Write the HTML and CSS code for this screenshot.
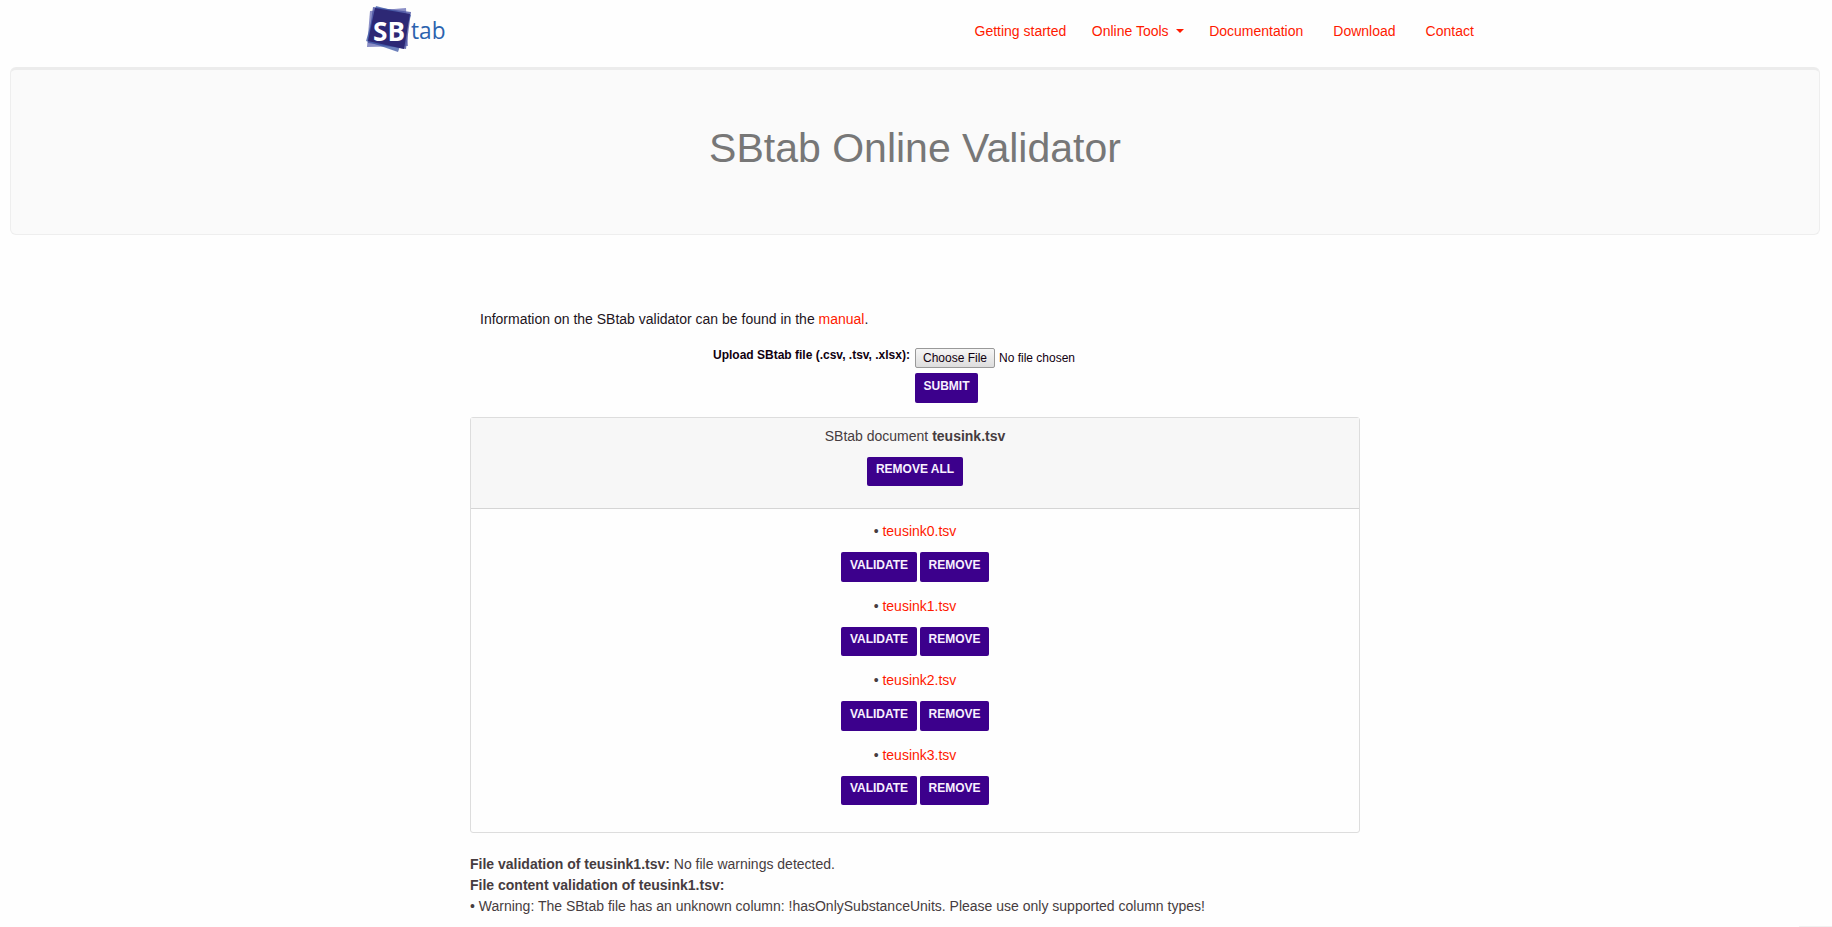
FILE: index.html
```html
<!DOCTYPE html>
<html lang="en">
<head>
<meta charset="utf-8">
<title>SBtab Online Validator</title>
<link rel="stylesheet" href="styles.css">
</head>
<body>
<nav class="navbar">
  <a class="logo" href="#" aria-label="SBtab">
    <svg width="84" height="54" viewBox="0 0 84 54">
      <path d="M7 11L43 8L45 46L4 47Z" fill="#5a5fae" opacity=".7"/>
      <path d="M10 7L48 12L43 49L5 43Z" fill="#4950a0" opacity=".8"/>
      <path d="M13 6L48 15L35 52L3 41Z" fill="#3b55a4" opacity=".75"/>
      <path d="M12 8L47 14L41 49L5 41Z" fill="#2d2875"/>
      <text class="logo-sb" x="10" y="40.5" textLength="32" lengthAdjust="spacingAndGlyphs">SB</text>
      <text class="logo-tab" x="48" y="39" textLength="34.5" lengthAdjust="spacingAndGlyphs">tab</text>
    </svg>
  </a>
  <div class="nav-links">
    <a href="#">Getting started</a>
    <a class="tools" href="#">Online Tools<span class="caret"></span></a>
    <a class="docs" href="#">Documentation</a>
    <a class="download" href="#">Download</a>
    <a class="contact" href="#">Contact</a>
  </div>
</nav>
<header class="jumbotron"><h1>SBtab Online Validator</h1></header>
<main class="content">
  <p class="intro">Information on the SBtab validator can be found in the <a href="#">manual</a>.</p>
  <form class="upload">
    <label class="upload-label">Upload SBtab file (.csv, .tsv, .xlsx):</label>
    <div class="upload-fields">
      <div class="file"><button type="button" class="choose">Choose File</button><span>No file chosen</span></div>
      <button type="button" class="btn submit">SUBMIT</button>
    </div>
  </form>
  <section class="card">
    <div class="card-header">
      <p>SBtab document <b>teusink.tsv</b></p>
      <button type="button" class="btn remove-all">REMOVE ALL</button>
    </div>
    <div class="card-body">
      <div class="item"><p>• <a href="#">teusink0.tsv</a></p><div class="actions"><button type="button" class="btn validate">VALIDATE</button><button type="button" class="btn remove">REMOVE</button></div></div>
      <div class="item"><p>• <a href="#">teusink1.tsv</a></p><div class="actions short"><button type="button" class="btn validate">VALIDATE</button><button type="button" class="btn remove">REMOVE</button></div></div>
      <div class="item"><p>• <a href="#">teusink2.tsv</a></p><div class="actions"><button type="button" class="btn validate">VALIDATE</button><button type="button" class="btn remove">REMOVE</button></div></div>
      <div class="item"><p>• <a href="#">teusink3.tsv</a></p><div class="actions short"><button type="button" class="btn validate">VALIDATE</button><button type="button" class="btn remove">REMOVE</button></div></div>
    </div>
  </section>
  <section class="results">
    <p><b>File validation of teusink1.tsv:</b> No file warnings detected.</p>
    <p><b>File content validation of teusink1.tsv:</b></p>
    <p>• Warning: The SBtab file has an unknown column: !hasOnlySubstanceUnits. Please use only supported column types!</p>
  </section>
</main>
<div class="corner"></div>
</body>
</html>
```
FILE: styles.css
```css
* { box-sizing: border-box; }
body { margin: 0; height: 927px; overflow: hidden; background: #fefefe; color: #463c40; font: 14px/21px "Liberation Sans", Arial, sans-serif; }
p, h1 { margin: 0; }
a { color: #ff1a00; text-decoration: none; }
.navbar { height: 67px; padding: 0 358px 0 363px; display: flex; justify-content: space-between; }
.logo { display: block; height: 54px; }
.logo svg { display: block; overflow: visible; }
.logo-sb { font: bold 26px "Open Sans", sans-serif; fill: #fff; }
.logo-tab { font: 23.5px "Open Sans", sans-serif; fill: #2b62ae; }
.nav-links { display: flex; width: 499.5px; margin: 21px 0 0; }
.nav-links a { white-space: nowrap; }
.nav-links .tools { margin-left: 25.5px; }
.caret { display: inline-block; margin-left: 7.5px; vertical-align: 3px; border: 4px solid transparent; border-top-color: #ff1a00; border-bottom: 0; }
.nav-links .docs { margin-left: 25px; }
.nav-links .download { margin-left: 30px; }
.nav-links .contact { margin-left: 30px; }
.jumbotron { height: 168px; margin: 0 12px 0 10px; padding-top: 54px; background: #fafafa; border: 1px solid #eee; border-top: 3px solid #ececec; border-radius: 6px; text-align: center; }
.jumbotron h1 { color: #777; font-size: 41px; line-height: 48px; font-weight: 400; }
.content { width: 890px; margin: 0 0 0 470px; }
.intro { padding: 74px 0 0 10px; color: #22141c; }
.upload { display: flex; height: 87px; padding: 18px 0 0 243px; font-size: 12px; color: #100010; }
.upload-label { width: 202px; font-weight: 700; line-height: 14px; }
.file { display: flex; height: 20px; line-height: 20px; gap: 4px; }
.choose { width: 80px; height: 20px; padding: 0; border: 1px solid #999; border-radius: 2px; background: linear-gradient(#f6f6f6, #ddd); color: #100010; font: 12px/18px "Liberation Sans", Arial, sans-serif; }
.btn { height: 30px; padding: 0 0 5px; border: 0; border-radius: 2px; background: #3c008c; color: #f8f0ff; font: bold 12px/14px "Liberation Sans", Arial, sans-serif; }
.submit { display: block; width: 63px; margin-top: 5px; }
.card { height: 416px; border: 1px solid #ddd; border-radius: 3px; text-align: center; }
.card-header { height: 91px; padding-top: 8px; background: #f7f7f7; border-bottom: 1px solid #d5d5d5; }
.btn.remove-all { display: block; width: 96px; height: 29px; margin: 10px auto 0; }
.card-body { padding-top: 12px; }
.item { height: 74.67px; }
.actions { display: flex; justify-content: center; gap: 3px; padding-top: 10px; }
.short .btn { height: 29px; }
.validate { width: 76px; }
.remove { width: 69px; }
.results { padding-top: 21px; }
.corner { position: absolute; right: 0; bottom: 0; width: 33px; height: 1px; background: #f0f0f0; }
```
